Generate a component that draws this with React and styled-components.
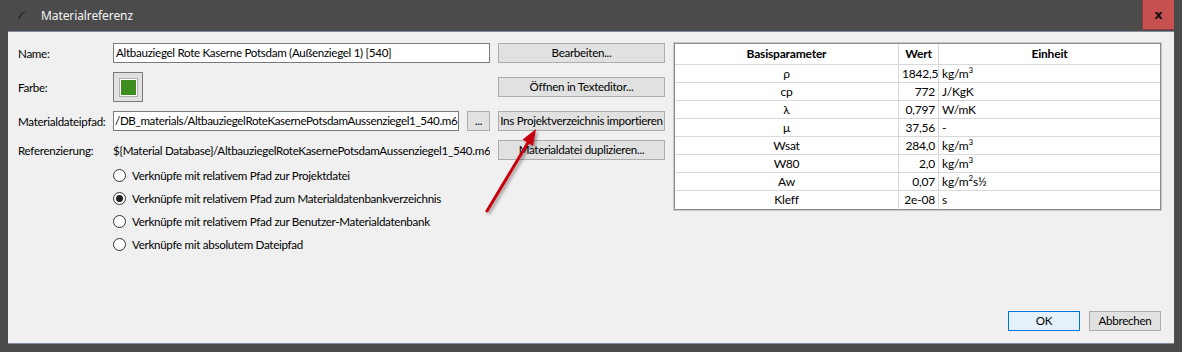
import React from "react";
import styled, { createGlobalStyle } from "styled-components";

const Global = createGlobalStyle`
  html, body { margin: 0; padding: 0; }
  body { width: 1182px; height: 352px; overflow: hidden; background: #4a4a4a; }
  * { box-sizing: border-box; }
`;

const FONT = `Lato, "Noto Sans", sans-serif`;

const Window = styled.div`
  width: 1182px;
  height: 352px;
  background: #4b4b4b;
  display: flex;
  flex-direction: column;
  padding: 0 8px 8px 8px;
  font-family: ${FONT};
  font-size: 11.6px;
  letter-spacing: -0.3px;
  color: #000;
`;

const TitleBar = styled.div`
  height: 31px;
  display: flex;
  align-items: center;
  position: relative;
  padding-left: 9px;
  padding-bottom: 1px;
`;

const TitleText = styled.span`
  color: #f4f4f4;
  font-size: 12px;
  margin-left: 12px;
  font-family: "Noto Sans", sans-serif;
  letter-spacing: -0.1px;
`;

const CloseButton = styled.div`
  position: absolute;
  right: 0;
  top: 0;
  width: 32px;
  height: 30px;
  background: #c75050;
  border-left: 1px solid #8a3a3a;
  border-bottom: 1px solid #8a3a3a;
  display: flex;
  align-items: center;
  justify-content: center;
  color: #111;
  font-weight: bold;
  font-size: 13px;
  letter-spacing: 0;
  font-family: "DejaVu Sans", sans-serif;
`;

const Client = styled.div`
  flex: 1;
  background: #f0f0f0;
  border-top: 1px solid #7d8a99;
  border-bottom: 1px solid #7d8a99;
  position: relative;
  display: flex;
  flex-direction: column;
  padding: 11px 13px 12px 10px;
`;

const Top = styled.div`
  display: flex;
  align-items: flex-start;
  gap: 9px;
`;

const Form = styled.div`
  display: grid;
  grid-template-columns: 87px 377px 167px;
  grid-template-rows: 20px 30px 20px 20px;
  column-gap: 8px;
  row-gap: 9px;
  align-items: center;
`;

const Label = styled.div`
  white-space: nowrap;
`;

const Input = styled.div`
  height: 20px;
  background: #fff;
  border: 1px solid #7a7a7a;
  padding: 0 ${(p) => (p.$tight ? "1px" : "2px")};
  letter-spacing: ${(p) => (p.$tight ? "-0.36px" : "inherit")};
  line-height: 18px;
  white-space: nowrap;
  overflow: hidden;
  flex: ${(p) => (p.$grow ? 1 : "none")};
  min-width: 0;
`;

const PlainText = styled.div`
  white-space: nowrap;
  overflow: hidden;
`;

const Button = styled.div`
  height: 20px;
  width: ${(p) => p.$w || "auto"};
  background: ${(p) => (p.$default ? "#e5f1fb" : "#e1e1e1")};
  border: 1px solid ${(p) => (p.$default ? "#0078d7" : "#adadad")};
  display: flex;
  align-items: center;
  justify-content: center;
  white-space: nowrap;
  line-height: 18px;
  flex: none;
  min-width: 0;
  overflow: hidden;
`;

const InlineRow = styled.div`
  display: flex;
  gap: 8px;
  align-items: center;
  min-width: 0;
`;

const ColorButton = styled.div`
  width: 30px;
  height: 30px;
  background: #e1e1e1;
  border: 1px solid #7a7a7a;
  display: flex;
  align-items: center;
  justify-content: center;
`;

const Swatch = styled.div`
  width: 17px;
  height: 17px;
  background: ${(p) => p.$color};
  border: 1px solid #fff;
  outline: 1px solid #b0b0b0;
`;

const RadioGroup = styled.div`
  display: flex;
  flex-direction: column;
  margin-left: 95px;
  margin-top: 4px;
`;

const RadioRow = styled.div`
  height: 23px;
  display: flex;
  align-items: center;
  gap: 6px;
`;

const RadioCircle = styled.span`
  width: 13px;
  height: 13px;
  border-radius: 50%;
  border: 1px solid #333;
  background: #fff;
  display: flex;
  align-items: center;
  justify-content: center;
  &::after {
    content: "";
    width: 7px;
    height: 7px;
    border-radius: 50%;
    background: ${(p) => (p.$checked ? "#222" : "transparent")};
  }
`;

const Table = styled.div`
  width: 489px;
  border: 1px solid #8c8c8c;
  outline: 1px solid #c8c8c8;
  background: #fff;
  display: grid;
  grid-template-columns: 224px 40px 1fr;
  grid-auto-rows: 18px;
  grid-template-rows: 21px;
  font-size: 12px;
  letter-spacing: -0.2px;
`;

const Cell = styled.div`
  border-right: ${(p) => (p.$last ? "none" : "1px solid #d9d9d9")};
  border-bottom: ${(p) => (p.$lastRow ? "none" : "1px solid #d9d9d9")};
  text-align: ${(p) => p.$align || "center"};
  padding: 0 3px;
  line-height: 17px;
  white-space: nowrap;
  font-weight: ${(p) => (p.$head ? "bold" : "normal")};
  ${(p) => (p.$head ? "line-height: 20px;" : "")}
`;

const Sup = styled.span`
  font-size: 8px;
  vertical-align: 5px;
  line-height: 0;
`;

const Spacer = styled.div`
  flex: 1;
`;

const Footer = styled.div`
  display: flex;
  justify-content: flex-end;
  gap: 9px;
`;

const Overlay = styled.svg`
  position: absolute;
  left: 0;
  top: 0;
  pointer-events: none;
`;

const rows = [
  ["ρ", "1842,5", <>kg/m<Sup>3</Sup></>],
  ["cp", "772", "J/KgK"],
  ["λ", "0,797", "W/mK"],
  ["μ", "37,56", "-"],
  ["Wsat", "284,0", <>kg/m<Sup>3</Sup></>],
  ["W80", "2,0", <>kg/m<Sup>3</Sup></>],
  ["Aw", "0,07", <>kg/m<Sup>2</Sup>s½</>],
  ["Kleff", "2e-08", "s"],
];

const radios = [
  ["Verknüpfe mit relativem Pfad zur Projektdatei", false],
  ["Verknüpfe mit relativem Pfad zum Materialdatenbankverzeichnis", true],
  ["Verknüpfe mit relativem Pfad zur Benutzer-Materialdatenbank", false],
  ["Verknüpfe mit absolutem Dateipfad", false],
];

export default function App() {
  return (
    <>
      <Global />
      <Window>
        <TitleBar>
          <svg width="12" height="10" viewBox="0 0 12 10">
            <path d="M1 9 C2 4 6 1 11 1 C7 2 4 5 3 9 Z" fill="#2e2e2e" />
          </svg>
          <TitleText>Materialreferenz</TitleText>
          <CloseButton>x</CloseButton>
        </TitleBar>
        <Client>
          <Top>
            <div>
              <Form>
                <Label>Name:</Label>
                <Input>Altbauziegel Rote Kaserne Potsdam (Außenziegel 1) [540]</Input>
                <Button>Bearbeiten...</Button>

                <Label>Farbe:</Label>
                <ColorButton>
                  <Swatch $color="#3e8e1f" />
                </ColorButton>
                <Button>Öffnen in Texteditor...</Button>

                <Label>Materialdateipfad:</Label>
                <InlineRow>
                  <Input $grow $tight>/DB_materials/AltbauziegelRoteKasernePotsdamAussenziegel1_540.m6</Input>
                  <Button $w="23px">...</Button>
                </InlineRow>
                <Button>Ins Projektverzeichnis importieren</Button>

                <Label>Referenzierung:</Label>
                <PlainText>${"{"}Material Database{"}"}/AltbauziegelRoteKasernePotsdamAussenziegel1_540.m6</PlainText>
                <Button>Materialdatei duplizieren...</Button>
              </Form>
              <RadioGroup>
                {radios.map(([t, c]) => (
                  <RadioRow key={t}>
                    <RadioCircle $checked={c} />
                    <span>{t}</span>
                  </RadioRow>
                ))}
              </RadioGroup>
            </div>
            <Table>
              <Cell $head>Basisparameter</Cell>
              <Cell $head>Wert</Cell>
              <Cell $head $last>Einheit</Cell>
              {rows.map(([p, v, u], i) => (
                <React.Fragment key={i}>
                  <Cell $lastRow={i === rows.length - 1}>{p}</Cell>
                  <Cell $align="right" $lastRow={i === rows.length - 1}>{v}</Cell>
                  <Cell $align="left" $last $lastRow={i === rows.length - 1}>{u}</Cell>
                </React.Fragment>
              ))}
            </Table>
          </Top>
          <Spacer />
          <Footer>
            <Button $w="72px" $default>OK</Button>
            <Button $w="72px">Abbrechen</Button>
          </Footer>
          <Overlay width="1166" height="313" viewBox="0 0 1166 313">
            <defs>
              <filter id="sh" x="-50%" y="-50%" width="200%" height="200%">
                <feDropShadow dx="2" dy="2" stdDeviation="1.5" floodColor="#000" floodOpacity="0.35" />
              </filter>
            </defs>
            <g filter="url(#sh)">
              <line x1="479" y1="179" x2="521" y2="109" stroke="#c8000a" strokeWidth="3" strokeLinecap="round" />
              <polygon points="528,97 525,114 514.6,107.6" fill="#c8000a" />
            </g>
          </Overlay>
        </Client>
      </Window>
    </>
  );
}
